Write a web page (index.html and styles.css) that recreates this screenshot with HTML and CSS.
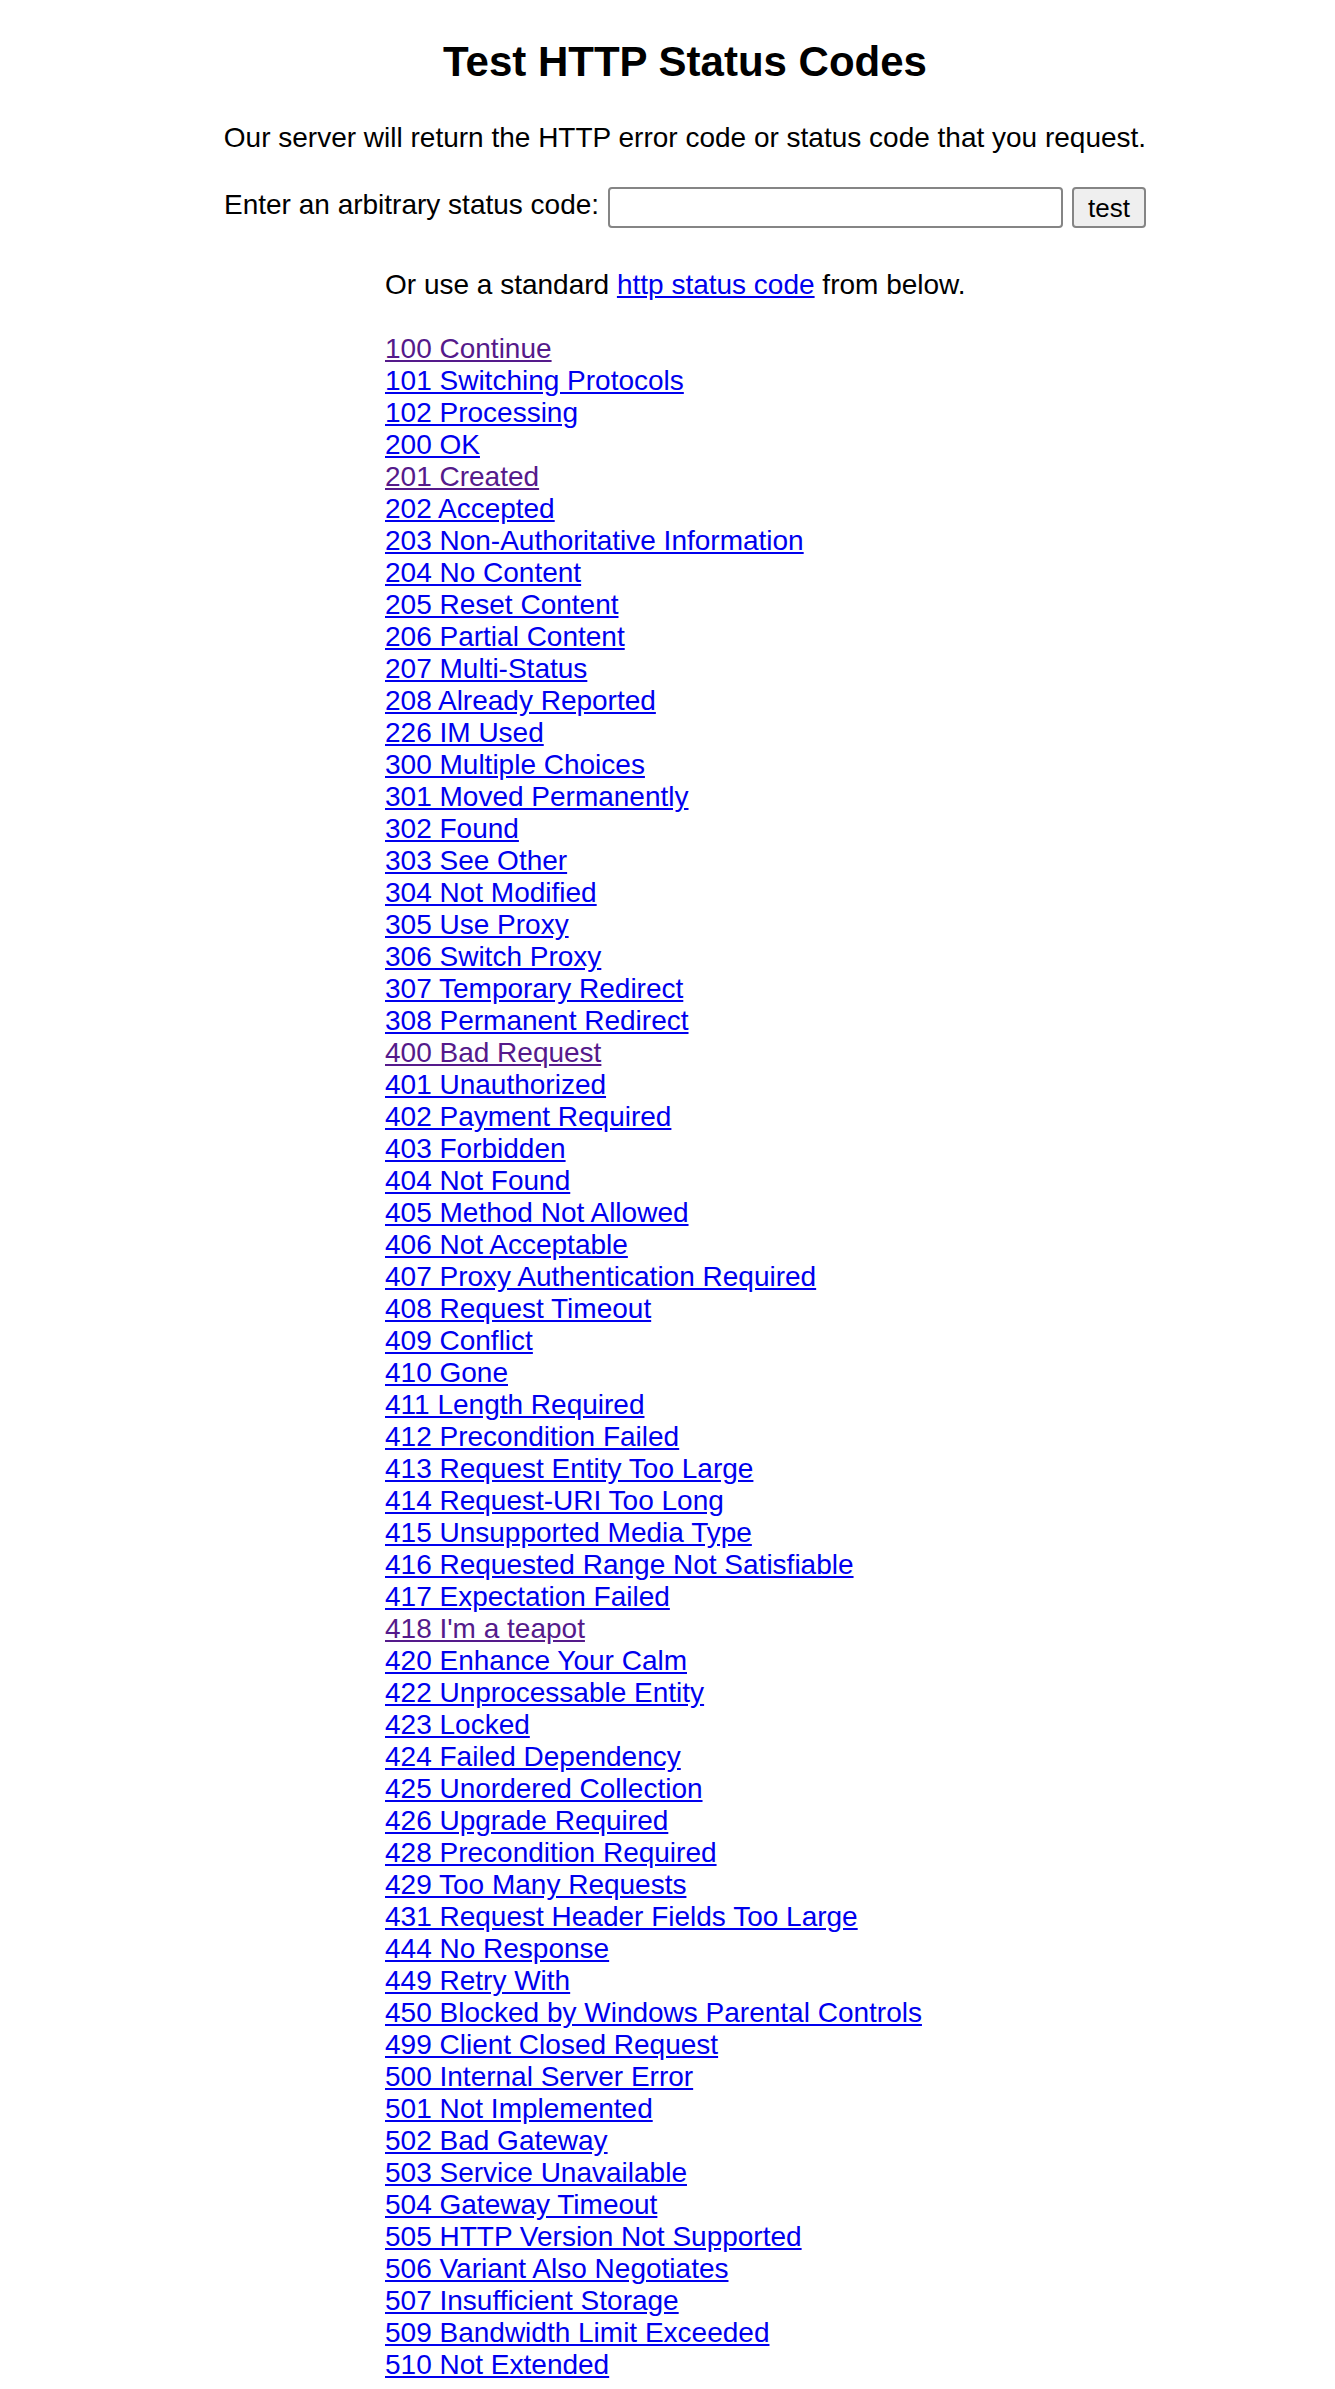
FILE: index.html
```html
<!DOCTYPE html>
<html>
<head>
<meta charset="utf-8">
<title>Test HTTP Status Codes</title>
<link rel="stylesheet" href="styles.css">
</head>
<body>
<div class="page">
  <h1 class="title">Test HTTP Status Codes</h1>
  <p class="intro">Our server will return the HTTP error code or status code that you request.</p>
  <form class="tester">
    <label class="tester-label" for="code">Enter an arbitrary status code:</label>
    <input class="tester-input" id="code" type="text">
    <button class="tester-button" type="button">test</button>
  </form>
</div>
<div class="codes">
  <p class="codes-intro">Or use a standard <a class="link" href="#http">http status code</a> from below.</p>
  <ul class="code-list">
    <li><a class="link visited" href="#100">100 Continue</a></li>
    <li><a class="link" href="#101">101 Switching Protocols</a></li>
    <li><a class="link" href="#102">102 Processing</a></li>
    <li><a class="link" href="#200">200 OK</a></li>
    <li><a class="link visited" href="#201">201 Created</a></li>
    <li><a class="link" href="#202">202 Accepted</a></li>
    <li><a class="link" href="#203">203 Non-Authoritative Information</a></li>
    <li><a class="link" href="#204">204 No Content</a></li>
    <li><a class="link" href="#205">205 Reset Content</a></li>
    <li><a class="link" href="#206">206 Partial Content</a></li>
    <li><a class="link" href="#207">207 Multi-Status</a></li>
    <li><a class="link" href="#208">208 Already Reported</a></li>
    <li><a class="link" href="#226">226 IM Used</a></li>
    <li><a class="link" href="#300">300 Multiple Choices</a></li>
    <li><a class="link" href="#301">301 Moved Permanently</a></li>
    <li><a class="link" href="#302">302 Found</a></li>
    <li><a class="link" href="#303">303 See Other</a></li>
    <li><a class="link" href="#304">304 Not Modified</a></li>
    <li><a class="link" href="#305">305 Use Proxy</a></li>
    <li><a class="link" href="#306">306 Switch Proxy</a></li>
    <li><a class="link" href="#307">307 Temporary Redirect</a></li>
    <li><a class="link" href="#308">308 Permanent Redirect</a></li>
    <li><a class="link visited" href="#400">400 Bad Request</a></li>
    <li><a class="link" href="#401">401 Unauthorized</a></li>
    <li><a class="link" href="#402">402 Payment Required</a></li>
    <li><a class="link" href="#403">403 Forbidden</a></li>
    <li><a class="link" href="#404">404 Not Found</a></li>
    <li><a class="link" href="#405">405 Method Not Allowed</a></li>
    <li><a class="link" href="#406">406 Not Acceptable</a></li>
    <li><a class="link" href="#407">407 Proxy Authentication Required</a></li>
    <li><a class="link" href="#408">408 Request Timeout</a></li>
    <li><a class="link" href="#409">409 Conflict</a></li>
    <li><a class="link" href="#410">410 Gone</a></li>
    <li><a class="link" href="#411">411 Length Required</a></li>
    <li><a class="link" href="#412">412 Precondition Failed</a></li>
    <li><a class="link" href="#413">413 Request Entity Too Large</a></li>
    <li><a class="link" href="#414">414 Request-URI Too Long</a></li>
    <li><a class="link" href="#415">415 Unsupported Media Type</a></li>
    <li><a class="link" href="#416">416 Requested Range Not Satisfiable</a></li>
    <li><a class="link" href="#417">417 Expectation Failed</a></li>
    <li><a class="link visited" href="#418">418 I'm a teapot</a></li>
    <li><a class="link" href="#420">420 Enhance Your Calm</a></li>
    <li><a class="link" href="#422">422 Unprocessable Entity</a></li>
    <li><a class="link" href="#423">423 Locked</a></li>
    <li><a class="link" href="#424">424 Failed Dependency</a></li>
    <li><a class="link" href="#425">425 Unordered Collection</a></li>
    <li><a class="link" href="#426">426 Upgrade Required</a></li>
    <li><a class="link" href="#428">428 Precondition Required</a></li>
    <li><a class="link" href="#429">429 Too Many Requests</a></li>
    <li><a class="link" href="#431">431 Request Header Fields Too Large</a></li>
    <li><a class="link" href="#444">444 No Response</a></li>
    <li><a class="link" href="#449">449 Retry With</a></li>
    <li><a class="link" href="#450">450 Blocked by Windows Parental Controls</a></li>
    <li><a class="link" href="#499">499 Client Closed Request</a></li>
    <li><a class="link" href="#500">500 Internal Server Error</a></li>
    <li><a class="link" href="#501">501 Not Implemented</a></li>
    <li><a class="link" href="#502">502 Bad Gateway</a></li>
    <li><a class="link" href="#503">503 Service Unavailable</a></li>
    <li><a class="link" href="#504">504 Gateway Timeout</a></li>
    <li><a class="link" href="#505">505 HTTP Version Not Supported</a></li>
    <li><a class="link" href="#506">506 Variant Also Negotiates</a></li>
    <li><a class="link" href="#507">507 Insufficient Storage</a></li>
    <li><a class="link" href="#509">509 Bandwidth Limit Exceeded</a></li>
    <li><a class="link" href="#510">510 Not Extended</a></li>
  </ul>
</div>
</body>
</html>
```

FILE: styles.css
```css
html, body {
  margin: 0;
  padding: 0;
  background: #ffffff;
}

body {
  font-family: "Liberation Sans", Arial, sans-serif;
  font-size: 28px;
  line-height: 32px;
  color: #000000;
}

.page {
  padding-left: 35px;
  text-align: center;
}

.title {
  margin: 38px 0 0;
  font-size: 42px;
  line-height: 48px;
  font-weight: bold;
}

.intro {
  margin: 36px 0 0;
}

.tester {
  margin: 33px 0 0;
  display: flex;
  justify-content: center;
  align-items: flex-start;
  height: 41px;
}

.tester-label {
  margin-top: 2px;
  margin-right: 9px;
}

.tester-input {
  box-sizing: border-box;
  width: 455px;
  height: 41px;
  margin: 0 9px 0 0;
  padding: 2px 4px;
  border: 2px solid #858585;
  border-radius: 4px;
  background: #ffffff;
  font-family: "Liberation Sans", Arial, sans-serif;
  font-size: 26px;
}

.tester-button {
  box-sizing: border-box;
  height: 41px;
  margin: 0;
  padding: 0 14px;
  border: 2px solid #858585;
  border-radius: 4px;
  background: #efefef;
  color: #000000;
  font-family: "Liberation Sans", Arial, sans-serif;
  font-size: 26px;
  line-height: 1;
}

.codes {
  margin-left: 385px;
}

.codes-intro {
  margin: 41px 0 0;
}

.code-list {
  list-style: none;
  margin: 32px 0 0;
  padding: 0;
}

.code-list li {
  line-height: 32px;
}

.link {
  color: #0000ee;
  text-decoration: underline;
}

.link.visited {
  color: #551a8b;
}
```
